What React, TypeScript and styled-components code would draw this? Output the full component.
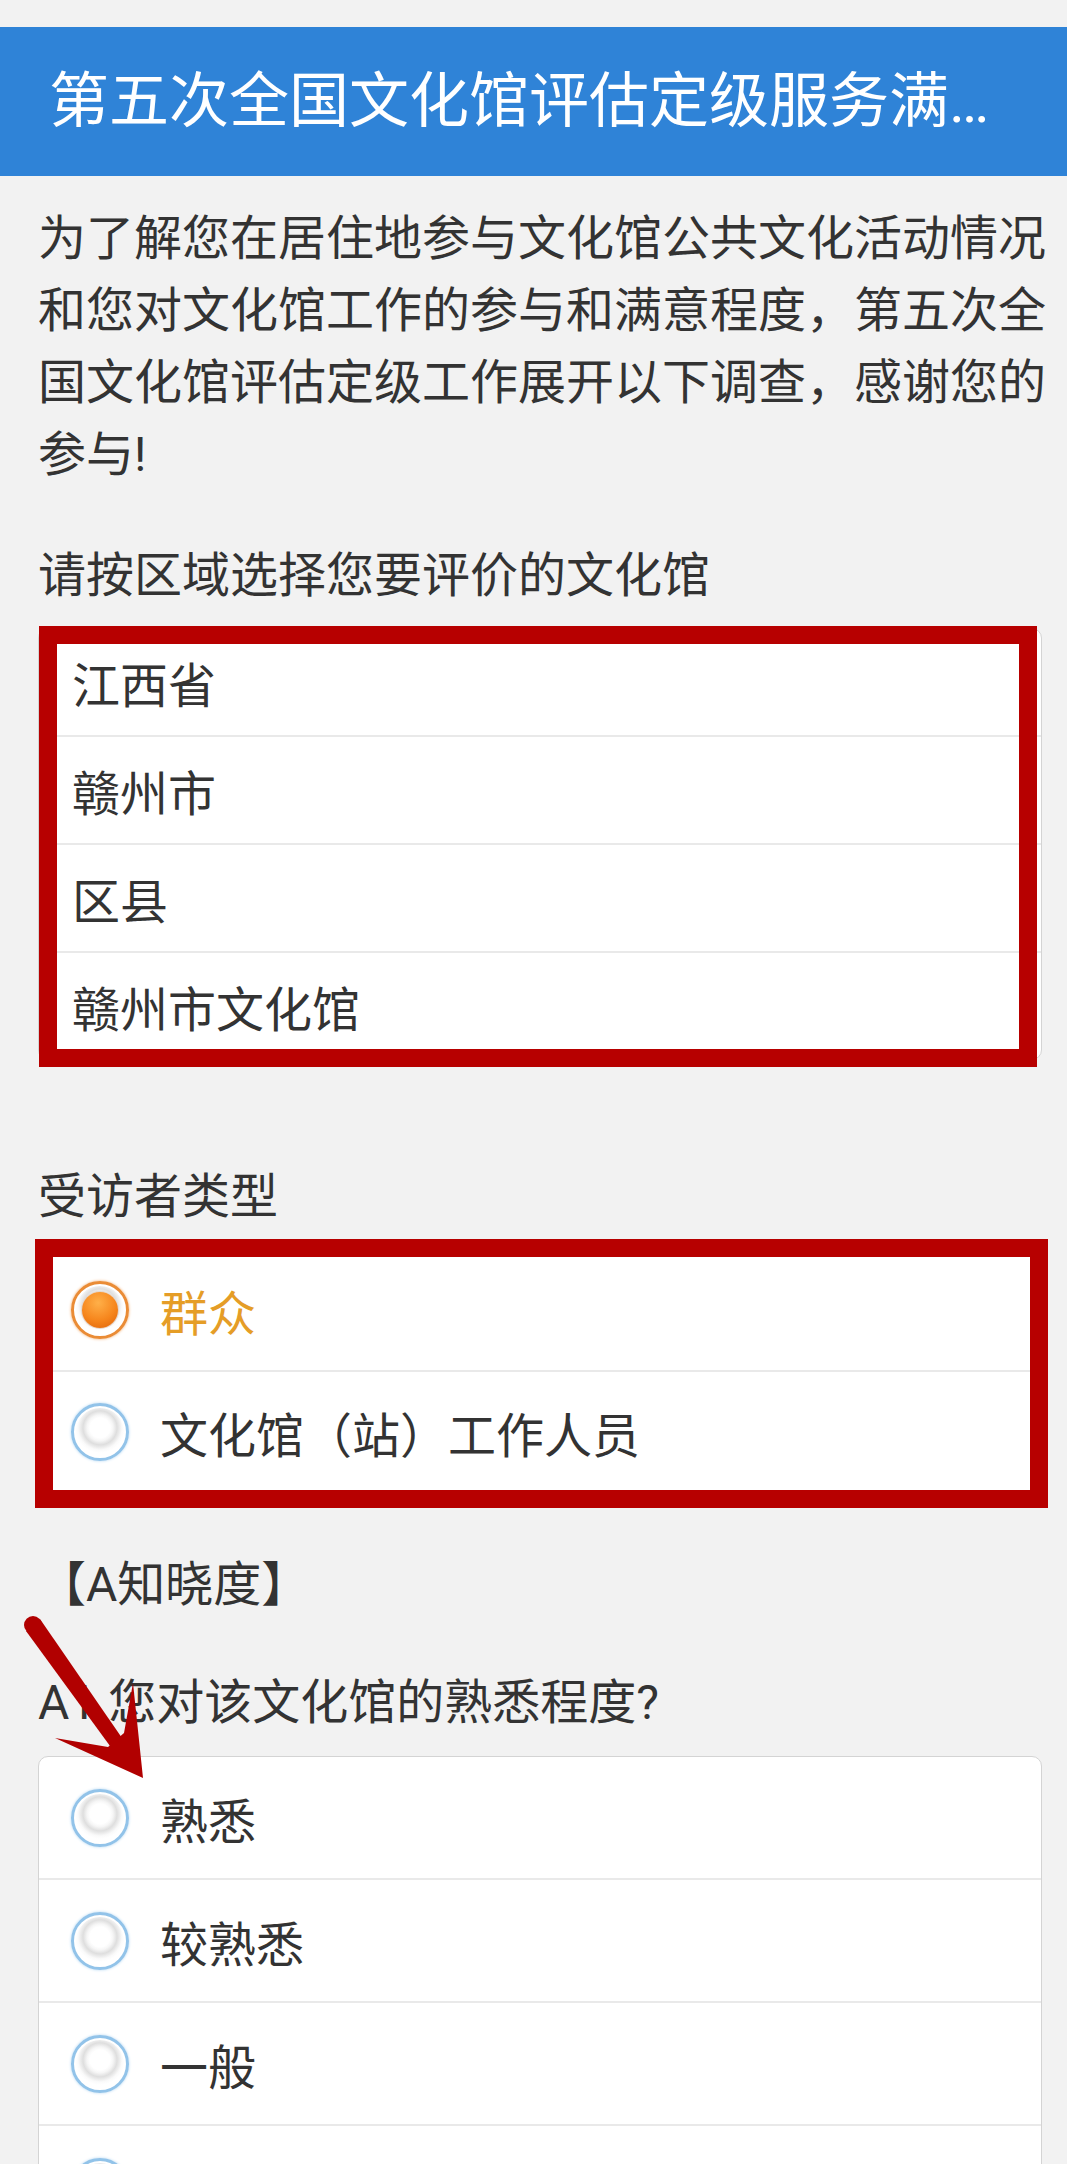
import React from "react";
import styled, { createGlobalStyle } from "styled-components";

const GlobalStyle = createGlobalStyle`
  html, body {
    margin: 0;
    padding: 0;
    background: #f2f2f2;
  }
  body {
    font-family: Roboto, "Noto Sans CJK SC", "Noto Sans", sans-serif;
    color: #333;
  }
`;

type Option = { label: string; checked?: boolean };

const regions = ["江西省", "赣州市", "区县", "赣州市文化馆"];

const visitorTypes: Option[] = [
  { label: "群众", checked: true },
  { label: "文化馆（站）工作人员" },
];

const familiarity: Option[] = [
  { label: "熟悉" },
  { label: "较熟悉" },
  { label: "一般" },
  { label: "不太熟悉" },
  { label: "不熟悉" },
];

const SelectList = ({ items }: { items: string[] }) => (
  <List>
    {items.map((item) => (
      <OptionRow key={item} $height={106}>
        {item}
      </OptionRow>
    ))}
  </List>
);

const RadioList = ({ options, rowHeight }: { options: Option[]; rowHeight: number }) => (
  <List>
    {options.map((opt) => (
      <OptionRow key={opt.label} $height={rowHeight} $checked={opt.checked}>
        <RadioMark $checked={opt.checked} />
        {opt.label}
      </OptionRow>
    ))}
  </List>
);

export default function App() {
  return (
    <>
      <GlobalStyle />
      <Page>
        <Header>
          <Title>第五次全国文化馆评估定级服务满意度调查</Title>
        </Header>
        <Content>
          <Intro>
            为了解您在居住地参与文化馆公共文化活动情况和您对文化馆工作的参与和满意程度，第五次全国文化馆评估定级工作展开以下调查，感谢您的参与!
          </Intro>

          <Label $gap={49}>请按区域选择您要评价的文化馆</Label>
          <ListWrap $gap={16}>
            <SelectList items={regions} />
            <Frame $inset="-2px 5px -7px 1px" />
          </ListWrap>

          <Label $gap={101}>受访者类型</Label>
          <ListWrap $gap={16}>
            <RadioList options={visitorTypes} rowHeight={120} />
            <Frame $inset="-10px -6px -15px -3px" />
          </ListWrap>

          <Label $gap={56}>【A知晓度】</Label>
          <Label $gap={46}>A1 您对该文化馆的熟悉程度?</Label>
          <ListWrap $gap={17}>
            <RadioList options={familiarity} rowHeight={121} />
          </ListWrap>
        </Content>

        {/* red annotation arrow pointing at the first option */}
        <Arrow viewBox="0 0 160 200">
          <polygon points="26,31 40,19 122,138 110,146" fill="#b10000" />
          <circle cx="33" cy="25" r="9" fill="#b10000" />
          <polygon points="143,178 55,138 108,147 124,133 133,83" fill="#b10000" />
        </Arrow>
      </Page>
    </>
  );
}

const Page = styled.div`
  position: relative;
  width: 1067px;
  padding-top: 27px;
  padding-bottom: 40px;
  box-sizing: border-box;
  overflow: hidden;
`;

const Header = styled.header`
  height: 149px;
  background: #2f83d7;
  display: flex;
  align-items: center;
  padding: 0 53px 0 49px;
`;

const Title = styled.h1`
  flex: 1;
  min-width: 0;
  margin: 0;
  font-size: 60px;
  font-weight: 400;
  line-height: 1.3;
  color: #fff;
  white-space: nowrap;
  overflow: hidden;
  text-overflow: ellipsis;
`;

const Content = styled.main`
  padding: 27px 19px 0 38px;
`;

const Intro = styled.p`
  margin: 0;
  font-size: 48px;
  line-height: 72px;
`;

const Label = styled.div<{ $gap: number }>`
  margin-top: ${({ $gap }) => $gap}px;
  font-size: 48px;
  line-height: 72px;
`;

const ListWrap = styled.div<{ $gap: number }>`
  position: relative;
  margin: ${({ $gap }) => $gap}px 6px 0 0;
`;

const List = styled.ul`
  list-style: none;
  margin: 0;
  padding: 0;
  background: #fff;
  border: 1px solid #d4d4d4;
  border-radius: 10px;
  overflow: hidden;
`;

const OptionRow = styled.li<{ $height: number; $checked?: boolean }>`
  height: ${({ $height }) => $height}px;
  display: flex;
  align-items: center;
  gap: 31px;
  padding-left: 33px;
  font-size: 48px;
  color: ${({ $checked }) => ($checked ? "#e59d27" : "#333")};

  & + & {
    border-top: 2px solid #e9e9e9;
  }
`;

const RadioMark = styled.span<{ $checked?: boolean }>`
  flex: none;
  width: 58px;
  height: 58px;
  margin-left: -1px;
  box-sizing: border-box;
  border-radius: 50%;
  border: 3px solid ${({ $checked }) => ($checked ? "#ea8c36" : "#92c3e9")};
  box-shadow: 0 0 3px ${({ $checked }) => ($checked ? "#f0a868" : "#b3d6f1")},
    inset 0 0 0 2px #fff;
  background: radial-gradient(
    circle at 50% 42%,
    #fff 0 10px,
    #f6f6f6 13px,
    #dedede 17px,
    #e9e9e9 19px,
    #fafafa 22px,
    #fff 25px
  );
  display: flex;
  align-items: center;
  justify-content: center;

  &::after {
    content: "";
    display: ${({ $checked }) => ($checked ? "block" : "none")};
    width: 36px;
    height: 36px;
    border-radius: 50%;
    background: radial-gradient(circle at 45% 30%, #ffb049 0, #f6861d 55%, #dd6008 100%);
    box-shadow: 0 0 0 1px #e4d6cc;
  }
`;

const Frame = styled.div<{ $inset: string }>`
  position: absolute;
  inset: ${({ $inset }) => $inset};
  border: 18px solid #b70000;
  pointer-events: none;
`;

const Arrow = styled.svg`
  position: absolute;
  left: 0;
  top: 1600px;
  width: 160px;
  height: 200px;
  pointer-events: none;
`;
